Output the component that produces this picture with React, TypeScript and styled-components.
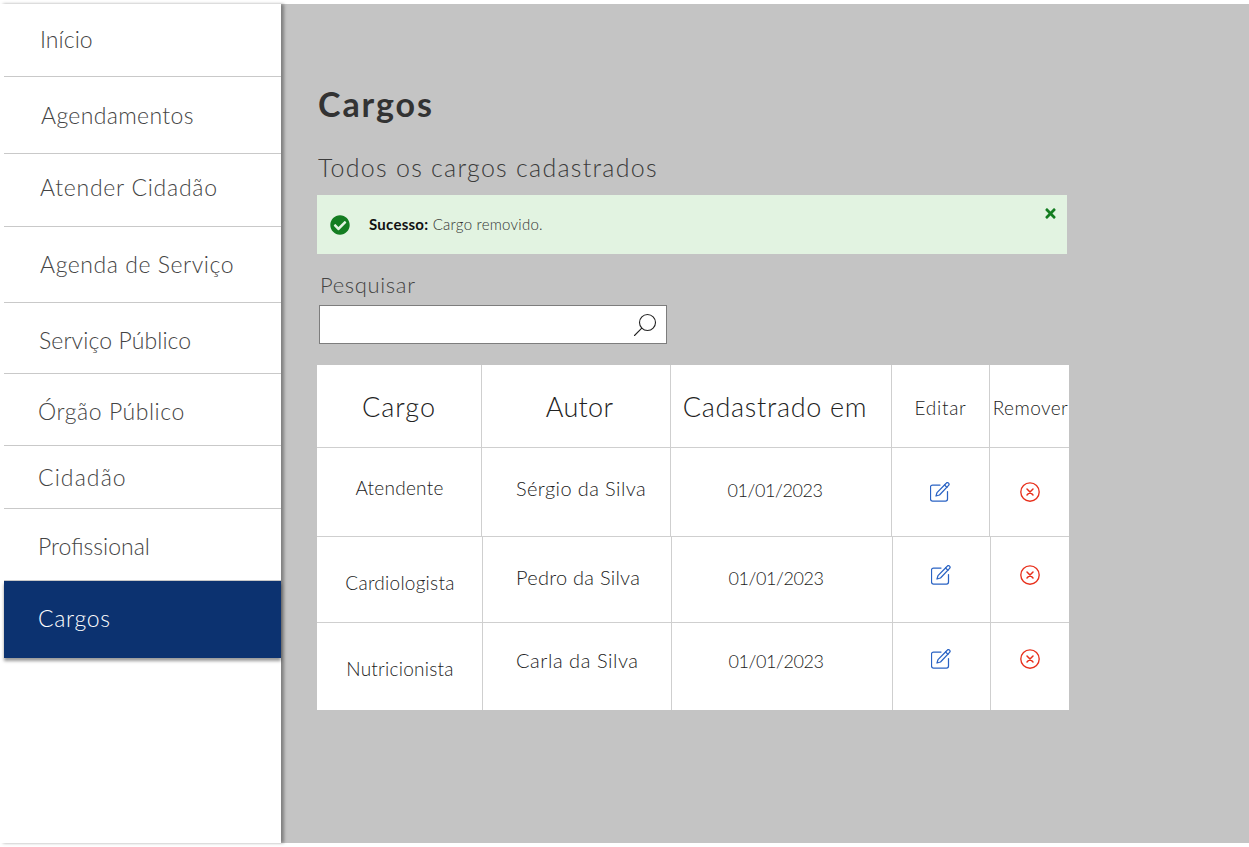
import React from "react";
import styled, { createGlobalStyle } from "styled-components";
import { FaCheckCircle, FaTimes } from "react-icons/fa";

const Global = createGlobalStyle`
  html, body { margin: 0; padding: 0; background: #fff; }
  body { font-family: "Lato", "Liberation Sans", sans-serif; font-weight: 300; }
`;

const Page = styled.div`
  width: 1249px;
  height: 847px;
  padding: 4px 0;
  box-sizing: border-box;
  display: flex;
  overflow: hidden;
`;
const Sidebar = styled.nav`
  width: 281px;
  flex: none;
  box-sizing: border-box;
  padding-left: 4px;
  background: #fff;
  box-shadow: 3px 0 3px rgba(0, 0, 0, 0.35);
  position: relative;
  z-index: 1;
  display: flex;
  flex-direction: column;
`;
const NavItem = styled.div<{ $h: number; $x: number; $y: number; $ls: number; $active?: boolean }>`
  height: ${(p) => p.$h}px;
  box-sizing: border-box;
  padding-left: ${(p) => p.$x}px;
  padding-top: ${(p) => p.$y}px;
  font-size: 23px;
  line-height: 28px;
  letter-spacing: ${(p) => p.$ls}px;
  color: ${(p) => (p.$active ? "#fff" : "#444")};
  background: ${(p) => (p.$active ? "#0c3270" : "transparent")};
  border-bottom: ${(p) => (p.$active ? "none" : "1px solid #c9c9c9")};
  box-shadow: ${(p) => (p.$active ? "0 3px 3px rgba(0,0,0,.4)" : "none")};
`;
const Main = styled.main`
  flex: 1;
  background: #c4c4c4;
  padding: 80px 0 0 36px;
  box-sizing: border-box;
`;
const Title = styled.h1`
  margin: 0 0 0 1px;
  font-size: 34px;
  line-height: 40px;
  font-weight: 700;
  letter-spacing: 1.9px;
  color: #333;
`;
const Subtitle = styled.h2`
  margin: 28px 0 0 1px;
  font-size: 25px;
  line-height: 30px;
  font-weight: 300;
  letter-spacing: 1.25px;
  color: #3c3c3c;
`;
const Alert = styled.div`
  position: relative;
  width: 750px;
  height: 59px;
  margin-top: 13px;
  background: #e2f3e1;
  display: flex;
  align-items: center;
  padding-left: 13px;
  box-sizing: border-box;
  color: #147d21;
`;
const AlertText = styled.span`
  margin: 0 0 1px 19px;
  font-size: 15px;
  letter-spacing: 0.25px;
  color: #333;
  b { font-weight: 700; color: #111; }
`;
const Close = styled.span`
  position: absolute;
  right: 9px;
  top: 11px;
  line-height: 0;
`;
const SearchLabel = styled.div`
  margin: 18px 0 0 3px;
  font-size: 22px;
  line-height: 26px;
  letter-spacing: 0.65px;
  color: #444;
`;
const SearchBox = styled.div`
  width: 348px;
  height: 39px;
  margin: 7px 0 0 2px;
  box-sizing: border-box;
  background: #fff;
  border: 1px solid #7d7d7d;
  display: flex;
  align-items: center;
  justify-content: flex-end;
  padding-right: 9px;
`;
const Table = styled.div`
  width: 752px;
  margin-top: 21px;
  background: #fff;
`;
const Row = styled.div<{ $cols: string; $h: number; $last?: boolean }>`
  display: grid;
  grid-template-columns: ${(p) => p.$cols};
  height: ${(p) => p.$h}px;
  box-sizing: border-box;
  border-bottom: ${(p) => (p.$last ? "none" : "1px solid #cfcfcf")};
`;
const Cell = styled.div<{ $size?: number; $ls?: number; $dy?: number; $pl?: number; $pr?: number; $start?: boolean }>`
  display: flex;
  align-items: center;
  justify-content: ${(p) => (p.$start ? "flex-start" : "center")};
  font-size: ${(p) => p.$size ?? 20}px;
  color: #222;
  letter-spacing: ${(p) => p.$ls ?? 0.5}px;
  white-space: nowrap;
  border-right: 1px solid #cfcfcf;
  padding-top: ${(p) => Math.max(p.$dy ?? 0, 0)}px;
  padding-bottom: ${(p) => Math.max(-(p.$dy ?? 0), 0)}px;
  padding-left: ${(p) => p.$pl ?? 0}px;
  padding-right: ${(p) => p.$pr ?? 0}px;
  box-sizing: border-box;
  &:last-child { border-right: none; }
`;

const EditIcon = () => (
  <svg width="20" height="20" viewBox="0 0 20 20" fill="none" stroke="#2a63c4" strokeWidth="1.25" strokeLinejoin="round" strokeLinecap="round">
    <path d="M10 3H2.500a2 2 0 0 0-2 2v12a2 2 0 0 0 2 2h13a2 2 0 0 0 2-2V9.500" />
    <path d="M16.200 1.200a1.600 1.600 0 0 1 2.400 2.200L9.500 13l-3.500 1 1-3.400z" />
    <path d="M14.600 3l2.400 2.400" />
  </svg>
);
const RemoveIcon = () => (
  <svg width="20" height="20" viewBox="0 0 20 20" fill="none" stroke="#e8301c" strokeWidth="1.35" strokeLinecap="round">
    <circle cx="10" cy="10" r="9.200" />
    <path d="M7 7l6 6M13 7l-6 6" strokeWidth="1.500" />
  </svg>
);
const SearchIcon = () => (
  <svg width="24" height="24" viewBox="0 0 24 24" fill="none" stroke="#222" strokeWidth="1.1" strokeLinecap="round">
    <circle cx="14.500" cy="9.500" r="8" />
    <path d="M8.800 15.200L1.500 22.500" />
  </svg>
);

const nav = [
  { t: "Início", h: 73, x: 36, y: 21, ls: 0.05 },
  { t: "Agendamentos", h: 77, x: 37, y: 24, ls: 0.35 },
  { t: "Atender Cidadão", h: 73, x: 36, y: 19, ls: 0.75 },
  { t: "Agenda de Serviço", h: 76, x: 36, y: 23, ls: 0.55 },
  { t: "Serviço Público", h: 71, x: 35, y: 23, ls: 0.1 },
  { t: "Órgão Público", h: 72, x: 34, y: 23, ls: 0.55 },
  { t: "Cidadão", h: 63, x: 34, y: 17, ls: 1.1 },
  { t: "Profissional", h: 72, x: 34, y: 23, ls: 0 },
];

const C1 = "165px 189px 221px 98px 1fr";
const C2 = "166px 189px 221px 98px 1fr";
const rows = [
  { h: 89, cols: C1, a: "Atendente", b: "Sérgio da Silva", c: "01/01/2023", ad: -9, bd: -8, cd: -5, id: 0, rd: -1, bl: 34, bs: 0.4 },
  { h: 86, cols: C2, a: "Cardiologista", b: "Pedro da Silva", c: "01/01/2023", ad: 5, bd: -6, cd: -3, id: -9, rd: -9, bl: 33, bs: 0.25 },
  { h: 87, cols: C2, a: "Nutricionista", b: "Carla da Silva", c: "01/01/2023", ad: 3, bd: -14, cd: -11, id: -15, rd: -15, bl: 33, bs: 0.55 },
];

export default function App() {
  return (
    <>
      <Global />
      <Page>
        <Sidebar>
          {nav.map((n) => (
            <NavItem key={n.t} $h={n.h} $x={n.x} $y={n.y} $ls={n.ls}>{n.t}</NavItem>
          ))}
          <NavItem $h={77} $x={34} $y={23} $ls={0.7} $active>Cargos</NavItem>
        </Sidebar>
        <Main>
          <Title>Cargos</Title>
          <Subtitle>Todos os cargos cadastrados</Subtitle>
          <Alert>
            <FaCheckCircle size={20} />
            <AlertText><b>Sucesso:</b> Cargo removido.</AlertText>
            <Close><FaTimes size={15} /></Close>
          </Alert>
          <SearchLabel>Pesquisar</SearchLabel>
          <SearchBox><SearchIcon /></SearchBox>
          <Table>
            <Row $cols={C1} $h={83}>
              <Cell $size={27} $ls={1}>Cargo</Cell>
              <Cell $size={27} $ls={0.3} $pl={7}>Autor</Cell>
              <Cell $size={27} $ls={0.7} $pr={12}>Cadastrado em</Cell>
              <Cell $size={19} $ls={0.75} $dy={2}>Editar</Cell>
              <Cell $size={19} $ls={0.45} $dy={2} $pl={2}>Remover</Cell>
            </Row>
            {rows.map((r, i) => (
              <Row key={r.a} $cols={r.cols} $h={r.h} $last={i === 2}>
                <Cell $size={19} $ls={0.25} $dy={r.ad} $pl={1}>{r.a}</Cell>
                <Cell $ls={r.bs} $dy={r.bd} $start $pl={r.bl}>{r.b}</Cell>
                <Cell $size={18} $ls={-0.4} $dy={r.cd} $pr={12}>{r.c}</Cell>
                <Cell $dy={r.id} $pr={2}><EditIcon /></Cell>
                <Cell $dy={r.rd}><RemoveIcon /></Cell>
              </Row>
            ))}
          </Table>
        </Main>
      </Page>
    </>
  );
}
